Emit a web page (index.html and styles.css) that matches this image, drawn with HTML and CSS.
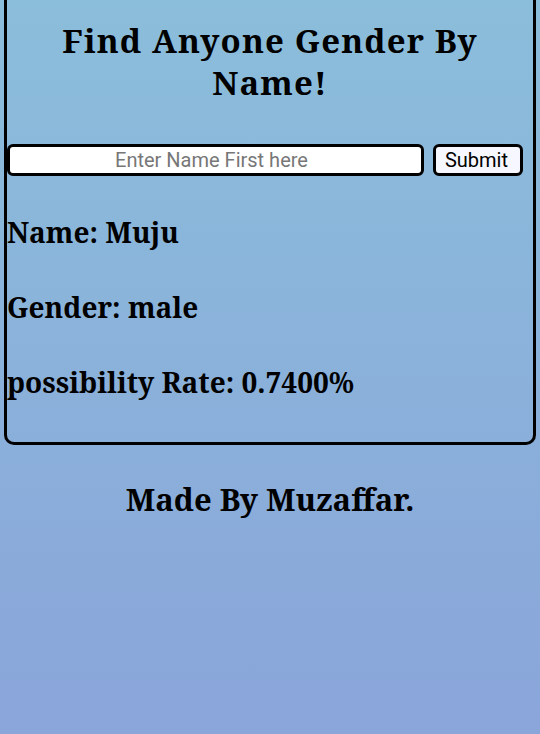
FILE: index.html
```html
<!DOCTYPE html>
<html>
<head>
<meta charset="utf-8">
<link rel="stylesheet" href="styles.css">
</head>
<body>
<div class="card">
  <h1 class="title">Find Anyone Gender By Name!</h1>
  <form class="search">
    <input class="name-input" type="text" placeholder="Enter Name First here">
    <button class="submit" type="button">Submit</button>
  </form>
  <h2 class="result">Name: Muju</h2>
  <h2 class="result">Gender: male</h2>
  <h2 class="result last">possibility Rate: 0.7400%</h2>
</div>
<h2 class="footer">Made By Muzaffar.</h2>
</body>
</html>
```
FILE: styles.css
```css
html {
  min-height: 100%;
  background: linear-gradient(to bottom, #8bbedb, #8aa5da);
}
body {
  margin: 0;
  min-height: 734px;
  font-family: "Noto Serif", "DejaVu Serif", serif;
  color: #000;
}
.card {
  margin: 0 4px;
  border: 3px solid #000;
  border-top: none;
  border-radius: 0 0 10px 10px;
  padding: 1px 0 0;
}
.title {
  font-size: 33px;
  font-weight: 700;
  letter-spacing: 1.1px;
  text-align: center;
  line-height: 42px;
  margin: 19px 30px 40px;
}
.search {
  display: flex;
  gap: 9px;
  padding-right: 10px;
  margin: 0;
}
.name-input {
  flex: 1;
  height: 32px;
  box-sizing: border-box;
  border: 3px solid #000;
  border-radius: 6px;
  background: #fff;
  font-family: Roboto, sans-serif;
  font-size: 20px;
  text-align: center;
  padding: 0 8px 0 0;
  margin: 0;
  outline: none;
}
.name-input::placeholder {
  color: #777;
}
.submit {
  width: 90px;
  height: 32px;
  box-sizing: border-box;
  border: 3px solid #000;
  border-radius: 6px;
  background: #f7f8ff;
  font-family: Roboto, sans-serif;
  font-size: 20px;
  color: #000;
  padding: 0 3px 0 0;
  margin: 0;
}
.result {
  font-size: 28px;
  font-weight: 700;
  line-height: 38px;
  margin: 37px 0 0;
}
.result.last {
  margin-bottom: 41px;
}
.footer {
  font-size: 31px;
  font-weight: 700;
  text-align: center;
  line-height: 40px;
  margin: 34px 0 0;
}
```
